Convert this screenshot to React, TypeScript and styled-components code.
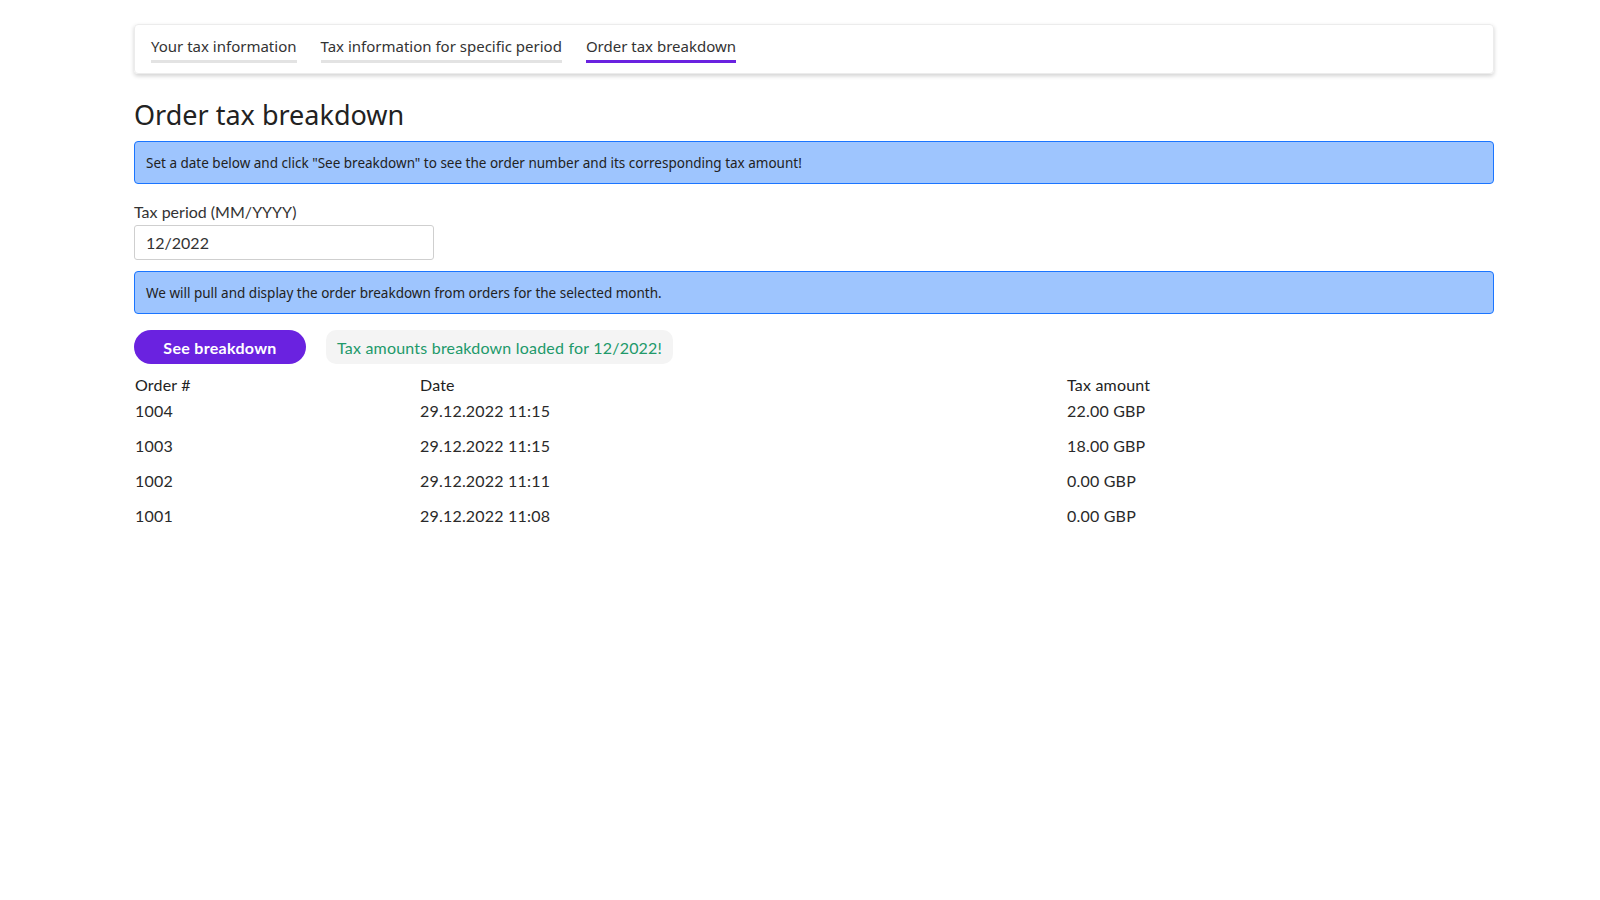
import styled, { createGlobalStyle } from 'styled-components'

const GlobalStyle = createGlobalStyle`
  body {
    margin: 0;
    background: #fff;
    font-family: Lato, "Noto Sans", sans-serif;
    color: #222;
  }
`

const rows = [
  { order: '1004', date: '29.12.2022 11:15', tax: '22.00 GBP' },
  { order: '1003', date: '29.12.2022 11:15', tax: '18.00 GBP' },
  { order: '1002', date: '29.12.2022 11:11', tax: '0.00 GBP' },
  { order: '1001', date: '29.12.2022 11:08', tax: '0.00 GBP' },
]

const tabs = ['Your tax information', 'Tax information for specific period', 'Order tax breakdown']

const App = () => {
  return (
    <Page>
      <GlobalStyle />
      <TabBar>
        {tabs.map((t, i) => (
          <Tab key={t} $active={i === 2}>{t}</Tab>
        ))}
      </TabBar>

      <Title>Order tax breakdown</Title>
      <Alert>Set a date below and click "See breakdown" to see the order number and its corresponding tax amount!</Alert>

      <Field>
        <Label htmlFor="period">Tax period (MM/YYYY)</Label>
        <Input id="period" defaultValue="12/2022" />
      </Field>

      <Alert>We will pull and display the order breakdown from orders for the selected month.</Alert>

      <Actions>
        <PrimaryButton>See breakdown</PrimaryButton>
        <Status>Tax amounts breakdown loaded for 12/2022!</Status>
      </Actions>

      <Table>
        <HeadCell>Order #</HeadCell>
        <HeadCell>Date</HeadCell>
        <HeadCell>Tax amount</HeadCell>
        {rows.map((r) => (
          <Row key={r.order}>
            <Cell>{r.order}</Cell>
            <Cell>{r.date}</Cell>
            <Cell>{r.tax}</Cell>
          </Row>
        ))}
      </Table>
    </Page>
  )
}

export default App

const Page = styled.div`
  width: 1360px;
  margin: 0 106px 0 134px;
  padding-top: 24px;
`

const TabBar = styled.div`
  display: flex;
  gap: 24px;
  height: 50px;
  padding: 0 16px;
  border: 1px solid #ececec;
  border-radius: 4px;
  box-shadow: 0 2px 4px rgba(0, 0, 0, 0.18);
  box-sizing: border-box;
  align-items: flex-start;
`

const Tab = styled.div<{ $active?: boolean }>`
  margin-top: 11px;
  padding-bottom: 4px;
  font-family: "Noto Sans", sans-serif;
  font-size: 15px;
  line-height: 20px;
  color: #333;
  border-bottom: 3px solid ${(p) => (p.$active ? '#6a22e0' : '#e3e3e3')};
`

const Title = styled.h1`
  margin: 25px 0 10px;
  font-family: "Noto Sans", sans-serif;
  font-weight: 400;
  font-size: 27px;
  line-height: 32px;
  color: #222;
`

const Alert = styled.div`
  background: #9ec5fe;
  border: 1px solid #1a75ff;
  border-radius: 4px;
  padding: 0 11px;
  height: 43px;
  box-sizing: border-box;
  display: flex;
  align-items: center;
  font-family: "Noto Sans", sans-serif;
  font-size: 13.5px;
  color: #222;
`

const Field = styled.div`
  display: flex;
  flex-direction: column;
  gap: 3px;
  margin: 18px 0 11px;
`

const Label = styled.label`
  font-size: 16px;
  line-height: 20px;
  color: #333;
`

const Input = styled.input`
  width: 300px;
  height: 35px;
  box-sizing: border-box;
  border: 1px solid #cfcfcf;
  border-radius: 3px;
  padding: 0 11px;
  font-family: Lato, sans-serif;
  font-size: 16px;
  color: #333;
  outline: none;
`

const Actions = styled.div`
  display: flex;
  gap: 20px;
  margin-top: 16px;
`

const PrimaryButton = styled.button`
  width: 172px;
  height: 34px;
  border: none;
  border-radius: 17px;
  background: #6a22e0;
  color: #fff;
  font-family: Lato, sans-serif;
  font-weight: 700;
  font-size: 16px;
  letter-spacing: 0.3px;
`

const Status = styled.div`
  height: 34px;
  padding: 0 11px;
  border-radius: 10px;
  background: #f4f4f4;
  color: #21996a;
  font-size: 16px;
  letter-spacing: 0.2px;
  display: flex;
  align-items: center;
`

const Table = styled.div`
  display: grid;
  grid-template-columns: 285px 647px 1fr;
  margin-top: 11px;
  padding-left: 1px;
`

const Row = styled.div`
  display: contents;
`

const HeadCell = styled.div`
  font-size: 16px;
  letter-spacing: 0.2px;
  line-height: 20px;
  color: #222;
  padding-bottom: 6px;
`

const Cell = styled.div`
  font-size: 16px;
  letter-spacing: 0.2px;
  line-height: 20px;
  color: #2a2a2a;
  padding: 0 0 15px;
`
